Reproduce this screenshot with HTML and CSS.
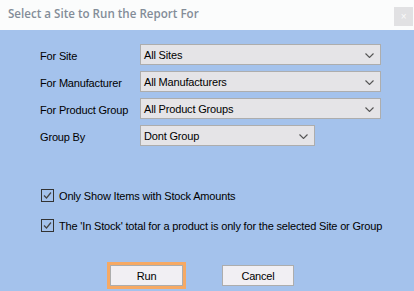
FILE: index.html
```html
<!DOCTYPE html>
<html>
<head>
<meta charset="utf-8">
<link rel="stylesheet" href="styles.css">
</head>
<body>
<div class="window">
  <div class="titlebar">
    <span class="title">Select a Site to Run the Report For</span>
    <div class="close">×</div>
  </div>
  <div class="content">
    <div class="fields">
      <div class="row">
        <span class="label">For Site</span>
        <div class="select wide"><span>All Sites</span><svg class="chev" width="9" height="5" viewBox="0 0 9 5"><path d="M0.5 0.5 L4.5 4.5 L8.5 0.5" fill="none" stroke="#555" stroke-width="1.1"/></svg></div>
      </div>
      <div class="row">
        <span class="label">For Manufacturer</span>
        <div class="select wide"><span>All Manufacturers</span><svg class="chev" width="9" height="5" viewBox="0 0 9 5"><path d="M0.5 0.5 L4.5 4.5 L8.5 0.5" fill="none" stroke="#555" stroke-width="1.1"/></svg></div>
      </div>
      <div class="row">
        <span class="label">For Product Group</span>
        <div class="select wide"><span>All Product Groups</span><svg class="chev" width="9" height="5" viewBox="0 0 9 5"><path d="M0.5 0.5 L4.5 4.5 L8.5 0.5" fill="none" stroke="#555" stroke-width="1.1"/></svg></div>
      </div>
      <div class="row">
        <span class="label">Group By</span>
        <div class="select short"><span>Dont Group</span><svg class="chev" width="9" height="5" viewBox="0 0 9 5"><path d="M0.5 0.5 L4.5 4.5 L8.5 0.5" fill="none" stroke="#555" stroke-width="1.1"/></svg></div>
      </div>
    </div>
    <div class="checks">
      <div class="check">
        <span class="box"><svg width="11" height="11" viewBox="0 0 11 11"><path d="M2 5.5 L4.5 8 L9 2.5" fill="none" stroke="#444" stroke-width="1.2"/></svg></span>
        <span>Only Show Items with Stock Amounts</span>
      </div>
      <div class="check">
        <span class="box"><svg width="11" height="11" viewBox="0 0 11 11"><path d="M2 5.5 L4.5 8 L9 2.5" fill="none" stroke="#444" stroke-width="1.2"/></svg></span>
        <span>The 'In Stock' total for a product is only for the selected Site or Group</span>
      </div>
    </div>
    <div class="buttons">
      <div class="focus"><div class="btn">Run</div></div>
      <div class="btn cancel">Cancel</div>
    </div>
  </div>
</div>
</body>
</html>
```

FILE: styles.css
```css
html, body {
  margin: 0;
  padding: 0;
}
body {
  font-family: "Liberation Sans", Arial, sans-serif;
  font-size: 11px;
  letter-spacing: -0.17px;
  color: #000;
  background: #a4c2ec;
}
.window {
  width: 414px;
  height: 291px;
  display: flex;
  flex-direction: column;
}
.titlebar {
  height: 30px;
  background: #fbfcfc;
  display: flex;
  justify-content: space-between;
  align-items: flex-start;
  padding-left: 8px;
  box-sizing: border-box;
}
.title {
  font-family: "Open Sans", sans-serif;
  font-weight: 600;
  font-size: 11.6px;
  letter-spacing: 0;
  color: #838c98;
  margin-top: 6px;
}
.close {
  width: 19px;
  height: 19px;
  margin-top: 7px;
  margin-right: 1px;
  background: #e1e1e3;
  color: #fafafa;
  font-size: 10px;
  line-height: 19px;
  text-align: center;
}
.content {
  flex: 1;
  background: #a4c2ec;
  padding: 14px 0 0 40px;
  box-sizing: border-box;
}
.fields {
  display: flex;
  flex-direction: column;
  gap: 6px;
}
.row {
  display: flex;
  align-items: center;
  height: 21px;
}
.label {
  width: 100px;
  padding-top: 3px;
}
.select {
  height: 21px;
  box-sizing: border-box;
  border: 1px solid #adadad;
  background: #e5e4e7;
  display: flex;
  align-items: center;
  justify-content: space-between;
  padding: 0 6px 0 3px;
}
.select.wide { width: 241px; }
.select.short { width: 175px; }
.chev { margin-top: 1px; }
.checks {
  margin-top: 43px;
  display: flex;
  flex-direction: column;
  gap: 17px;
}
.check {
  display: flex;
  align-items: center;
  height: 13px;
  gap: 5px;
  margin-left: 1px;
}
.box {
  width: 13px;
  height: 13px;
  box-sizing: border-box;
  border: 1px solid #333;
  display: flex;
  align-items: center;
  justify-content: center;
}
.box svg { display: block; }
.buttons {
  margin-top: 30px;
  margin-left: 67px;
  display: flex;
  align-items: center;
  gap: 36px;
}
.focus {
  background: #f6a964;
  padding: 3px;
}
.btn {
  width: 73px;
  height: 21px;
  box-sizing: border-box;
  border: 1px solid #adadad;
  background: #f1eff3;
  display: flex;
  align-items: center;
  justify-content: center;
}
.cancel { width: 72px; }
```
